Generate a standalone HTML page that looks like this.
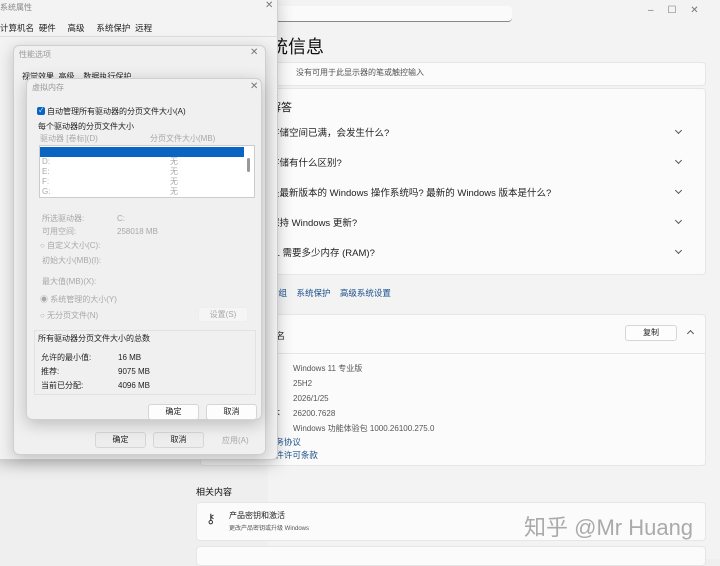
<!DOCTYPE html>
<html><head><meta charset="utf-8"><style>
*{margin:0;padding:0;box-sizing:border-box}
body{width:720px;height:559px;overflow:hidden;background:#efefef;font-family:"Liberation Sans","Noto Sans CJK SC",sans-serif;font-size:8px;color:#222;position:relative}
.a{position:absolute;white-space:nowrap}
.card{position:absolute;background:#fbfbfb;border:1px solid #e6e6e6;border-radius:4px}
.chev{position:absolute;left:676px;width:5px;height:5px;border-right:1px solid #555;border-bottom:1px solid #555;transform:rotate(45deg)}
.dlg{position:absolute;background:#f0f0f0;border:1px solid #cfcfcf;border-radius:6px;box-shadow:0 4px 16px rgba(0,0,0,.22)}
.btn{position:absolute;background:#fdfdfd;border:1px solid #d6d6d6;border-radius:3px;text-align:center;line-height:14px;font-size:8px}
.g{color:#a8a8a8}
</style></head><body>
<div class="a" style="left:268px;top:0;width:452px;height:559px;background:#f3f3f3"></div>
<div class="a" style="left:270px;top:6px;width:242px;height:16px;background:#fafafa;border-radius:4px;border-bottom:1px solid #888"></div>
<div class="a" style="left:648px;top:5px;font-size:10px;color:#777">–&nbsp;&nbsp;&nbsp;&nbsp;&nbsp;☐&nbsp;&nbsp;&nbsp;&nbsp;&nbsp;✕</div>
<div class="a" style="left:270px;top:33px;font-size:18px;color:#111">统信息</div>
<div class="card" style="left:268px;top:62px;width:438px;height:24px"></div>
<div class="a" style="left:296px;top:67px;color:#555">没有可用于此显示器的笔或触控输入</div>
<div class="card" style="left:268px;top:88px;width:438px;height:187px"></div>
<div class="a" style="left:270px;top:99px;font-size:11px;color:#111">解答</div>
<div class="a" style="left:270px;top:125px;font-size:9.5px">存储空间已满，会发生什么?</div><div class="chev" style="top:128px"></div>
<div class="a" style="left:270px;top:155px;font-size:9.5px">存储有什么区别?</div><div class="chev" style="top:158px"></div>
<div class="a" style="left:270px;top:185px;font-size:9.5px">是最新版本的 Windows 操作系统吗? 最新的 Windows 版本是什么?</div><div class="chev" style="top:188px"></div>
<div class="a" style="left:270px;top:215px;font-size:9.5px">保持 Windows 更新?</div><div class="chev" style="top:218px"></div>
<div class="a" style="left:270px;top:245px;font-size:9.5px">11 需要多少内存 (RAM)?</div><div class="chev" style="top:248px"></div>
<div class="a" style="left:270px;top:287px;color:#1a4f8a;font-size:8.5px">作组&nbsp;&nbsp;&nbsp;&nbsp;系统保护&nbsp;&nbsp;&nbsp;&nbsp;高级系统设置</div>
<div class="card" style="left:200px;top:314px;width:506px;height:152px"></div>
<div class="a" style="left:200px;top:353px;width:506px;height:1px;background:#e6e6e6"></div>
<div class="a" style="left:276px;top:329px;font-size:9px">名</div>
<div class="btn" style="left:625px;top:325px;width:52px;height:16px">复制</div>
<div class="a" style="left:688px;top:331px;width:5px;height:5px;border-left:1px solid #555;border-top:1px solid #555;transform:rotate(45deg)"></div>
<div class="a" style="left:293px;top:361px;color:#555;line-height:15px">Windows 11 专业版<br>25H2<br>2026/1/25<br>26200.7628<br>Windows 功能体验包 1000.26100.275.0</div>
<div class="a" style="left:262px;top:406px;font-size:9px">版本</div>
<div class="a" style="left:230px;top:436px;color:#1a4f8a;line-height:13px;font-size:8.5px">Microsoft 服务协议<br>Microsoft 软件许可条款</div>
<div class="a" style="left:196px;top:485px;font-size:9px;color:#111">相关内容</div>
<div class="card" style="left:196px;top:502px;width:510px;height:39px"></div>
<div class="a" style="left:206px;top:511px;font-size:13px;color:#333">⚷</div>
<div class="a" style="left:229px;top:510px;font-size:8px">产品密钥和激活</div>
<div class="a" style="left:229px;top:523px;font-size:6px;color:#555">更改产品密钥或升级 Windows</div>
<div class="card" style="left:196px;top:546px;width:510px;height:20px"></div>
<div class="a" style="left:524px;top:510px;font-size:22px;color:rgba(150,150,150,.8)">知乎 @Mr Huang</div>
<!-- system properties -->
<div class="dlg" style="left:-6px;top:-6px;width:284px;height:466px;background:#f3f3f3"></div>
<div class="a" style="left:0;top:2px;color:#888">系统属性</div>
<div class="a" style="left:265px;top:0;color:#777;font-size:10px">✕</div>
<div class="a" style="left:0;top:22px;font-size:8.5px">计算机名&nbsp;&nbsp;硬件&nbsp;&nbsp;&nbsp;&nbsp;&nbsp;高级&nbsp;&nbsp;&nbsp;&nbsp;&nbsp;系统保护&nbsp;&nbsp;远程</div>
<div class="a" style="left:0;top:36px;width:278px;height:1px;background:#ddd"></div>
<!-- performance options -->
<div class="dlg" style="left:13px;top:45px;width:253px;height:410px"></div>
<div class="a" style="left:19px;top:49px;color:#999">性能选项</div>
<div class="a" style="left:250px;top:47px;color:#777;font-size:10px">✕</div>
<div class="a" style="left:22px;top:71px">视觉效果&nbsp;&nbsp;高级&nbsp;&nbsp;&nbsp;&nbsp;数据执行保护</div>
<div class="btn" style="left:95px;top:432px;width:51px;height:16px;background:#ededed">确定</div>
<div class="btn" style="left:153px;top:432px;width:51px;height:16px;background:#ededed">取消</div>
<div class="a g" style="left:222px;top:435px">应用(A)</div>
<!-- virtual memory -->
<div class="dlg" style="left:26px;top:78px;width:236px;height:342px"></div>
<div class="a" style="left:32px;top:82px;color:#999">虚拟内存</div>
<div class="a" style="left:250px;top:81px;color:#777;font-size:10px">✕</div>
<div class="a" style="left:37px;top:107px;width:8px;height:8px;background:#0a64c2;border-radius:2px;color:#fff;font-size:6px;line-height:8px;text-align:center">✓</div>
<div class="a" style="left:47px;top:106px">自动管理所有驱动器的分页文件大小(A)</div>
<div class="a" style="left:38px;top:121px">每个驱动器的分页文件大小</div>
<div class="a g" style="left:40px;top:133px">驱动器 [卷标](D)</div>
<div class="a g" style="left:150px;top:133px">分页文件大小(MB)</div>
<div class="a" style="left:39px;top:145px;width:216px;height:53px;background:#fff;border:1px solid #ccc"></div>
<div class="a" style="left:40px;top:147px;width:204px;height:10px;background:#0a64c2"></div>
<div class="a" style="left:247px;top:158px;width:3px;height:14px;background:#999;border-radius:2px"></div>
<div class="a g" style="left:42px;top:157px;line-height:10px">D:<br>E:<br>F:<br>G:</div>
<div class="a g" style="left:170px;top:157px;line-height:10px">无<br>无<br>无<br>无</div>
<div class="a g" style="left:42px;top:212px;line-height:13px">所选驱动器:<br>可用空间:</div>
<div class="a g" style="left:117px;top:212px;line-height:13px">C:<br>258018 MB</div>
<div class="a g" style="left:40px;top:240px">○ 自定义大小(C):</div>
<div class="a g" style="left:42px;top:255px">初始大小(MB)(I):</div>
<div class="a g" style="left:42px;top:276px">最大值(MB)(X):</div>
<div class="a g" style="left:40px;top:294px">◉ 系统管理的大小(Y)</div>
<div class="a g" style="left:40px;top:310px">○ 无分页文件(N)</div>
<div class="btn g" style="left:198px;top:307px;width:50px;height:15px;background:#f5f5f5;border-color:#eee">设置(S)</div>
<div class="a" style="left:34px;top:330px;width:222px;height:65px;border:1px solid #e2e2e2"></div>
<div class="a" style="left:38px;top:333px">所有驱动器分页文件大小的总数</div>
<div class="a" style="left:41px;top:351px;line-height:14px">允许的最小值:<br>推荐:<br>当前已分配:</div>
<div class="a" style="left:118px;top:351px;line-height:14px">16 MB<br>9075 MB<br>4096 MB</div>
<div class="btn" style="left:148px;top:404px;width:51px;height:16px">确定</div>
<div class="btn" style="left:206px;top:404px;width:51px;height:16px">取消</div>
</body></html>
